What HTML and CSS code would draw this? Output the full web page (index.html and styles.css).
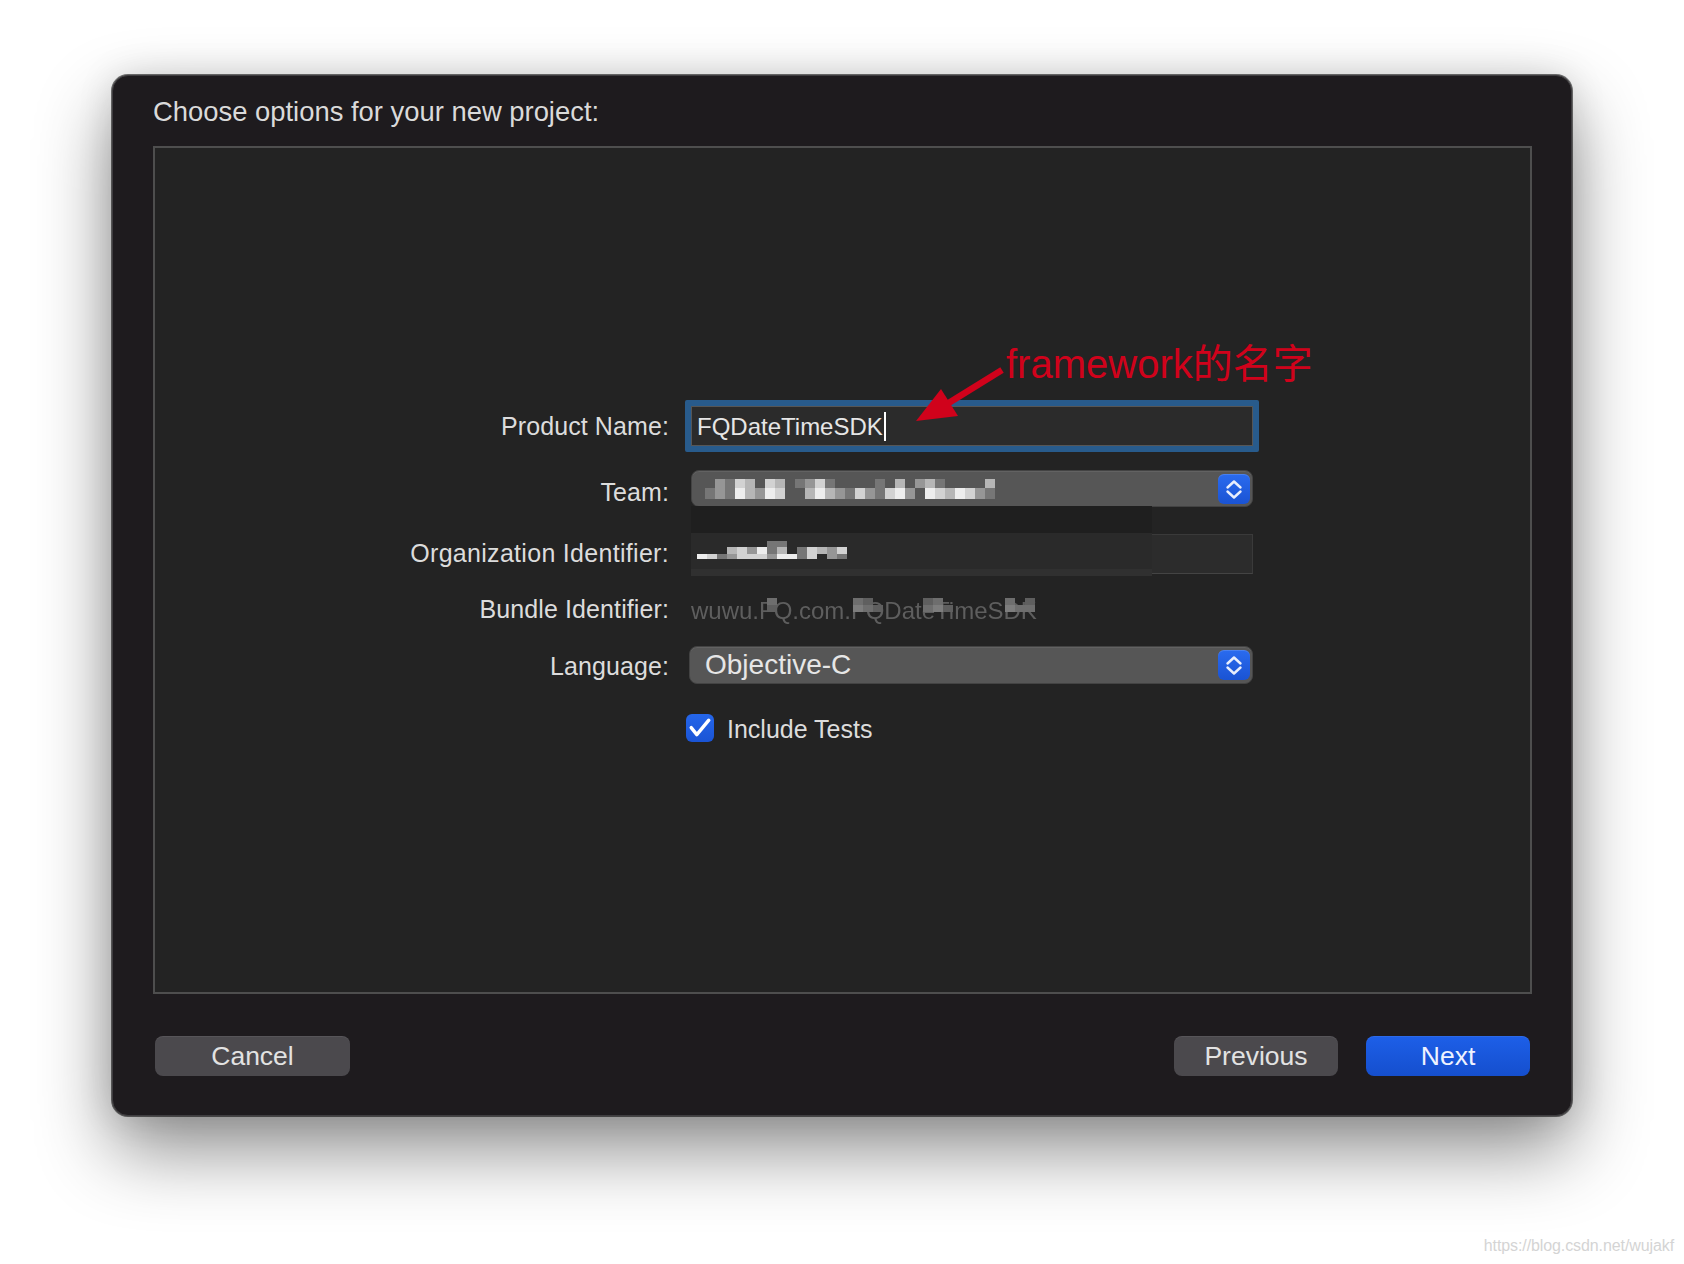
FILE: index.html
```html
<!DOCTYPE html>
<html lang="en">
<head>
<meta charset="utf-8">
<title>Choose options for your new project</title>
<link rel="stylesheet" href="styles.css">
</head>
<body>
<div class="page">
  <div class="window">
    <h1 class="title">Choose options for your new project:</h1>
    <div class="panel">
      <div class="form">
        <div class="row row-product">
          <div class="label">Product Name:</div>
          <div class="field focus"><span class="value">FQDateTimeSDK</span><span class="caret"></span></div>
        </div>
        <div class="row row-team">
          <div class="label">Team:</div>
          <div class="popup">
            <div class="mosaic team-mosaic" aria-hidden="true">
              <div class="mrow r9"><i class="s0"></i><i class="s2"></i><i class="s1"></i><i class="s4"></i><i class="s3"></i><i class="s0"></i><i class="s4"></i><i class="s3"></i><i class="s0"></i><i class="s1"></i><i class="s2"></i><i class="s4"></i><i class="s1"></i><i class="s0"></i><i class="s0"></i><i class="s0"></i><i class="s0"></i><i class="s1"></i><i class="s0"></i><i class="s3"></i><i class="s0"></i><i class="s2"></i><i class="s3"></i><i class="s1"></i><i class="s0"></i><i class="s0"></i><i class="s0"></i><i class="s0"></i><i class="s3"></i></div>
              <div class="mrow r11"><i class="s1"></i><i class="s2"></i><i class="s1"></i><i class="s5"></i><i class="s3"></i><i class="s2"></i><i class="s5"></i><i class="s4"></i><i class="s0"></i><i class="s0"></i><i class="s3"></i><i class="s5"></i><i class="s3"></i><i class="s2"></i><i class="s1"></i><i class="s4"></i><i class="s2"></i><i class="s1"></i><i class="s4"></i><i class="s5"></i><i class="s2"></i><i class="s0"></i><i class="s5"></i><i class="s4"></i><i class="s3"></i><i class="s5"></i><i class="s4"></i><i class="s2"></i><i class="s1"></i></div>
            </div>
            <div class="stepper"><svg width="32" height="30" viewBox="0 0 32 30"><path d="M9.5 13.5 L16 7.5 L22.5 13.5 M9.5 17.5 L16 23.5 L22.5 17.5" fill="none" stroke="#e8eefc" stroke-width="2.4" stroke-linecap="round" stroke-linejoin="round"/></svg></div>
          </div>
        </div>
        <div class="row row-org">
          <div class="label">Organization Identifier:</div>
          <div class="tfield">
            <div class="mosaic org-mosaic" aria-hidden="true">
              <div class="mrow r6"><i class="s0"></i><i class="s0"></i><i class="s0"></i><i class="s0"></i><i class="s0"></i><i class="s0"></i><i class="s0"></i><i class="s1"></i><i class="s1"></i></div>
              <div class="mrow r7"><i class="s0"></i><i class="s0"></i><i class="s0"></i><i class="s3"></i><i class="s4"></i><i class="s2"></i><i class="s5"></i><i class="s1"></i><i class="s3"></i><i class="s0"></i><i class="s1"></i><i class="s4"></i><i class="s3"></i><i class="s2"></i><i class="s4"></i></div>
              <div class="mrow r5"><i class="s5"></i><i class="s4"></i><i class="s1"></i><i class="s2"></i><i class="s4"></i><i class="s4"></i><i class="s4"></i><i class="s2"></i><i class="s5"></i><i class="s5"></i><i class="s1"></i><i class="s4"></i><i class="s0"></i><i class="s2"></i><i class="s1"></i></div>
            </div>
          </div>
        </div>
        <div class="row row-bundle">
          <div class="label">Bundle Identifier:</div>
          <div class="bundle">
            <span class="bundle-text">wuwu.FQ.com.FQDateTimeSDK</span>
            <div class="blocks b1"><i class="d2"></i><i class="d1"></i></div>
            <div class="blocks b2"><i class="d2"></i><i class="d1"></i><i class="d0"></i><i class="d3"></i><i class="d2"></i><i class="d1"></i></div>
            <div class="blocks b3"><i class="d1"></i><i class="d2"></i><i class="d0"></i><i class="d2"></i><i class="d3"></i><i class="d1"></i></div>
            <div class="blocks b4"><i class="d2"></i><i class="d0"></i><i class="d1"></i><i class="d3"></i><i class="d2"></i><i class="d2"></i></div>
          </div>
        </div>
        <div class="row row-lang">
          <div class="label">Language:</div>
          <div class="popup popup-lang">
            <span class="popup-text">Objective-C</span>
            <div class="stepper"><svg width="32" height="30" viewBox="0 0 32 30"><path d="M9.5 13.5 L16 7.5 L22.5 13.5 M9.5 17.5 L16 23.5 L22.5 17.5" fill="none" stroke="#e8eefc" stroke-width="2.4" stroke-linecap="round" stroke-linejoin="round"/></svg></div>
          </div>
        </div>
        <div class="row row-check">
          <div class="label"></div>
          <div class="check">
            <span class="checkbox"><svg width="28" height="28" viewBox="0 0 28 28"><path d="M5.2 13.6 L10.8 20.6 L22.8 6.2" fill="none" stroke="#ffffff" stroke-width="3.4" stroke-linecap="round" stroke-linejoin="round"/></svg></span>
            <span class="check-label">Include Tests</span>
          </div>
        </div>

        <div class="censor" aria-hidden="true"></div>
        <svg class="arrow" width="120" height="100" viewBox="0 0 120 100" aria-hidden="true">
          <line x1="102" y1="40" x2="47" y2="74" stroke="#d0021b" stroke-width="6.5"/>
          <polygon points="16,91 41,59 58,86" fill="#d0021b"/>
        </svg>
        <div class="annotation">framework的名字</div>
      </div>
    </div>
    <div class="footer">
      <button class="btn btn-cancel">Cancel</button>
      <button class="btn btn-prev">Previous</button>
      <button class="btn btn-next">Next</button>
    </div>
  </div>
  <div class="watermark">https://blog.csdn.net/wujakf</div>
</div>
</body>
</html>
```
FILE: styles.css
```css
* { box-sizing: border-box; }
html, body { margin: 0; padding: 0; background: #ffffff; }
body {
  width: 1684px;
  height: 1264px;
  overflow: hidden;
  font-family: "Liberation Sans", Arial, "Noto Sans CJK SC", sans-serif;
}
.page {
  padding: 75px 0 0 112px;
  height: 1264px;
}
.window {
  width: 1460px;
  height: 1041px;
  background: #1e1b1e;
  border: 1px solid #3f3d40;
  border-radius: 16px;
  box-shadow: 0 0 0 1px rgba(0,0,0,0.55), 0 34px 74px rgba(0,0,0,0.45), 0 0 36px rgba(0,0,0,0.12);
  padding: 19px 39px 39px 40px;
  display: flex;
  flex-direction: column;
}
.title {
  margin: 0;
  font-weight: normal;
  font-size: 27.4px;
  line-height: 34px;
  color: #dadada;
}
.panel {
  margin-top: 17px;
  height: 848px;
  border: 2px solid #4e4e4e;
  background: #232323;
}
.form {
  position: relative;
  padding-top: 258px;
  display: flex;
  flex-direction: column;
}
.row {
  display: grid;
  grid-template-columns: 514px 562px;
  column-gap: 22px;
  align-items: start;
}
.label {
  text-align: right;
  font-size: 25px;
  line-height: 25px;
  letter-spacing: 0.1px;
  color: #dcdcdc;
  white-space: nowrap;
}
.row-product .label { margin-top: 8px; }
.row-team { margin-top: 24px; }
.row-team .label { margin-top: 10px; }
.row-org { margin-top: 27px; }
.row-org .label { margin-top: 7px; letter-spacing: 0.3px; }
.row-bundle { margin-top: 23px; }
.row-lang { margin-top: 24px; }
.row-lang .label { margin-top: 8px; }
.row-check { margin-top: 30px; }

/* product name field */
.field {
  height: 40px;
  background: #2b2b2b;
  border: 1px solid #565656;
  border-radius: 0.5px;
  box-shadow: 0 0 0 6px #285b8c;
  display: flex;
  align-items: center;
  padding: 1px 0 0 5px;
}
.value {
  font-size: 24px;
  color: #e6e6e6;
}
.caret {
  display: inline-block;
  width: 2px;
  height: 29px;
  background: #ffffff;
  margin-left: 1px;
}

/* popups */
.popup {
  height: 37px;
  border-radius: 8px;
  background: #565656;
  border: 1px solid #434343;
  box-shadow: inset 0 1px 0 #626262;
  display: flex;
  align-items: center;
  padding-left: 13px;
}
.popup-lang {
  height: 38px;
  width: 564px;
  margin-left: -2px;
  padding-left: 15px;
}
.popup-text {
  font-size: 28px;
  line-height: 36px;
  color: #e6e6e6;
}
.stepper {
  width: 32px;
  height: 30px;
  margin-left: auto;
  margin-right: 2px;
  border-radius: 6px;
  background: linear-gradient(#2a6bef, #1a53d3);
  box-shadow: inset 0 1px 0 rgba(255,255,255,0.15);
  display: flex;
}

/* mosaic (censored text) */
.mosaic { display: flex; flex-direction: column; }
.mrow { display: flex; }
.mrow i { display: block; width: 10px; }
.r5 i { height: 5px; }
.r6 i { height: 6px; }
.r7 i { height: 7px; }
.r9 i { height: 9px; }
.r11 i { height: 11px; }
.s0 { background: transparent; }
.s1 { background: #767676; }
.s2 { background: #969696; }
.s3 { background: #b6b6b6; }
.s4 { background: #d2d2d2; }
.s5 { background: #ededed; }

/* org identifier field */
.tfield {
  height: 40px;
  background: #2c2c2c;
  border: 1px solid #3a3a3a;
  border-bottom-color: #444444;
  padding: 6px 0 0 5px;
}
.org-mosaic { position: relative; z-index: 2; }

/* bundle identifier */
.bundle {
  position: relative;
  height: 25px;
}
.bundle-text {
  display: block;
  font-size: 24px;
  line-height: 25px;
  padding-top: 1px;
  color: #5e5e5e;
  filter: blur(0.7px);
  white-space: nowrap;
}
.blocks {
  position: absolute;
  top: 1px;
  display: grid;
  grid-template-columns: repeat(3, 10px);
  grid-auto-rows: 7px;
}
.blocks i { display: block; }
.b1 { left: 76px; grid-template-columns: 10px; }
.b2 { left: 162px; }
.b3 { left: 232px; }
.b4 { left: 314px; }
.d0 { background: transparent; }
.d1 { background: #5f5f5f; }
.d2 { background: #6e6e6e; }
.d3 { background: #7d7d7d; }

/* checkbox */
.check {
  display: flex;
  align-items: flex-start;
  margin-left: -5px;
}
.checkbox {
  width: 28px;
  height: 28px;
  border-radius: 6px;
  background: linear-gradient(#2566ea, #1a54d5);
  display: flex;
}
.check-label {
  margin-left: 13px;
  margin-top: 3px;
  font-size: 25px;
  line-height: 25px;
  color: #dcdcdc;
}

/* overlays */
.censor {
  position: absolute;
  left: 536px;
  top: 358px;
  width: 461px;
  height: 70px;
  z-index: 1;
  background: linear-gradient(#1f1f1f 0, #1f1f1f 27px, #2a2a2a 27px, #2a2a2a 63px, #303030 63px, #303030 70px);
}
.arrow {
  position: absolute;
  left: 745px;
  top: 182px;
}
.annotation {
  position: absolute;
  left: 851px;
  top: 196px;
  font-size: 40px;
  line-height: 40px;
  color: #d0021b;
  white-space: nowrap;
}

/* footer buttons */
.footer {
  margin-top: 42px;
  display: flex;
  gap: 28px;
  padding: 0 2px;
}
.btn {
  height: 40px;
  border: none;
  border-radius: 8px;
  background: #4b494d;
  box-shadow: inset 0 1px 0 rgba(255,255,255,0.07);
  color: #e2e2e2;
  font-family: inherit;
  font-size: 26.5px;
  line-height: 40px;
  padding: 0;
}
.btn-cancel { width: 195px; margin-right: auto; }
.btn-prev { width: 164px; }
.btn-next {
  width: 164px;
  background: linear-gradient(#1d5fe8, #154fce);
  color: #eef2ff;
}

.watermark {
  margin-top: 121px;
  text-align: right;
  padding-right: 10px;
  font-size: 16px;
  line-height: 18px;
  letter-spacing: -0.1px;
  color: #d4d4d4;
}
```
